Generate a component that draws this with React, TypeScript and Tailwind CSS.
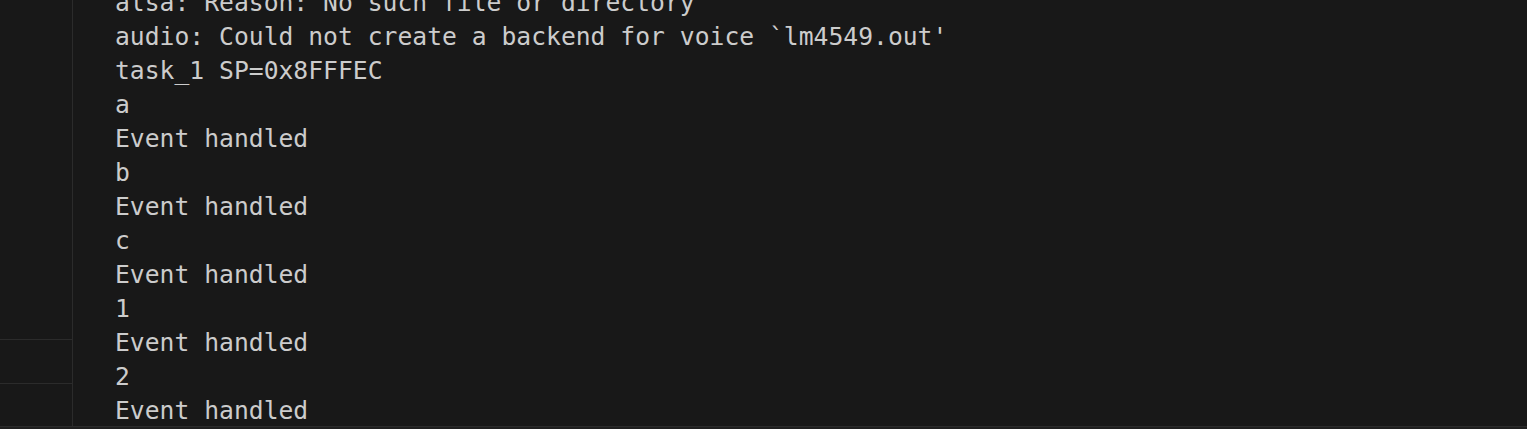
const lines = [
  "alsa: Reason: No such file or directory",
  "audio: Could not create a backend for voice `lm4549.out'",
  "task_1 SP=0x8FFFEC",
  "a",
  "Event handled",
  "b",
  "Event handled",
  "c",
  "Event handled",
  "1",
  "Event handled",
  "2",
  "Event handled",
];

export default function App() {
  return (
    <div className="flex h-[429px] w-full flex-col overflow-hidden bg-[#181818]">
      <div className="flex h-[426px] min-h-0">
        {/* side panel */}
        <div className="flex w-[73px] shrink-0 flex-col border-r border-[#2b2b2b]">
          <div className="h-[340px] border-b border-[#2b2b2b]" />
          <div className="h-[44px] border-b border-[#2b2b2b]" />
          <div className="flex-1" />
        </div>
        {/* terminal output */}
        <div className="min-w-0 flex-1 overflow-hidden pl-[42px]">
          <div
            className="-mt-[14px] whitespace-pre text-[24.7px] leading-[34px] text-[#cccccc]"
            style={{ fontFamily: '"DejaVu Sans Mono", "Liberation Mono", monospace' }}
          >
            {lines.map((l, i) => (
              <div key={i}>{l}</div>
            ))}
          </div>
        </div>
      </div>
      <div className="h-[3px] border-t border-[#2b2b2b] bg-[#1f1f1f]" />
    </div>
  );
}
